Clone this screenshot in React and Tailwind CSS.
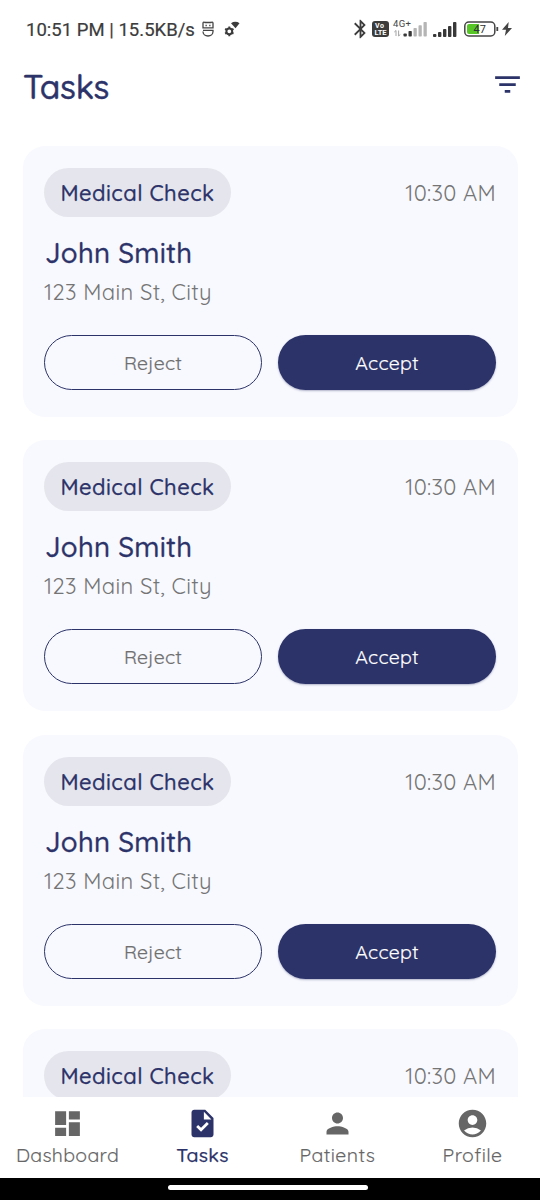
import React from "react";
import { MdDashboard, MdTask, MdPerson, MdFilterList, MdBluetooth } from "react-icons/md";

function AccountCircle() {
  return (
    <svg viewBox="0 0 24 24" className="size-[33px]" fill="currentColor">
      <path d="M12 2C6.48 2 2 6.48 2 12s4.48 10 10 10 10-4.48 10-10S17.52 2 12 2zm0 4c1.93 0 3.5 1.57 3.5 3.5S13.93 13 12 13s-3.5-1.57-3.5-3.5S10.07 6 12 6zm0 14c-2.03 0-4.43-.82-6.14-2.88a9.947 9.947 0 0 1 12.28 0C16.43 19.18 14.03 20 12 20z" />
    </svg>
  );
}

function Signal({ className }) {
  const bars = [
    [0, 12, 3], [5, 10, 5], [10, 7, 8], [15, 4, 11], [20, 0, 15],
  ];
  return (
    <svg viewBox="0 0 24 15" className={className}>
      {bars.map(([x, y, h]) => (
        <rect key={x} x={x} y={y} width="3.4" height={h} rx="0.9" fill="#383838" />
      ))}
    </svg>
  );
}

function StatusBar() {
  return (
    <div className="flex h-[58px] shrink-0 items-center pl-[26px] pr-[28px] text-[#3c3c3c]">
      <span className="w-[170px] pt-[1px] whitespace-nowrap font-[Roboto,sans-serif] text-[18.5px] leading-[24px] tracking-[0.02px] [-webkit-text-stroke:0.2px_#3c3c3c]">10:51 PM | 15.5KB/s</span>
      <svg viewBox="0 0 12 16" className="mb-[1px] ml-[6px] h-4 w-3" fill="none" stroke="#444" strokeWidth="1.3">
        <path d="M1 6.8V2.2C1 .8 2.4.8 3 1.5h6c.6-.7 2-.7 2 .7v4.6zM1 9.3h10v1.2a5 4.5 0 0 1-10 0" />
        <path d="M3.5 4.5h1.3M7.2 4.5h1.3" />
      </svg>
      <svg viewBox="0 0 16 16" className="mb-[1px] ml-[10px] size-4">
        <circle cx="5.3" cy="10.3" r="2.9" fill="none" stroke="#3c3c3c" strokeWidth="2" />
        <path d="M5.3 5.5v2M5.3 13v2.2M1.1 7.9l1.8 1M7.7 11.7l1.8 1M1.1 12.7l1.8-1M7.7 8.9l1.8-1" stroke="#3c3c3c" strokeWidth="1.9" />
        <path d="M7 2.2C9.5.4 13 .4 15.5 2.2L11.5 7.3z" fill="#3c3c3c" />
      </svg>
      <div className="ml-auto flex items-center">
        <MdBluetooth className="mb-[1px] h-[22px] w-[23px]" />
        <svg viewBox="0 0 17 16" className="h-4 w-[17px]">
          <rect width="17" height="16" rx="3" fill="#3c3c3c" />
          <text x="3" y="7.2" fill="#fff" fontSize="7" fontWeight="700" fontFamily="Roboto, sans-serif" textLength="9">Vo</text>
          <text x="2.5" y="14" fill="#fff" fontSize="7.5" fontWeight="700" fontFamily="Roboto, sans-serif" textLength="12">LTE</text>
        </svg>
        <svg viewBox="0 0 36 18" className="mb-[2px] ml-[4px] h-[18px] w-9">
          <text x="0" y="7.8" fill="#444" fontSize="9.5" fontFamily="Roboto, sans-serif" textLength="18">4G+</text>
          <path d="M3 17v-5.5L1.3 13M5.6 11.5V17l1.7-1.5" fill="none" stroke="#999" strokeWidth="0.9" />
          <rect x="10.5" y="14.5" width="3.3" height="3" rx=".8" fill="#383838" />
          <rect x="15.5" y="12" width="3.3" height="5.5" rx=".8" fill="#383838" />
          <rect x="20.5" y="9" width="3.3" height="8.5" rx=".8" fill="#b5b5b5" />
          <rect x="25.5" y="6.3" width="3.3" height="11.2" rx=".8" fill="#b5b5b5" />
          <rect x="30.5" y="3" width="3.3" height="14.5" rx=".8" fill="#b5b5b5" />
        </svg>
        <Signal className="ml-[4px] h-[15px] w-6" />
        <svg viewBox="0 0 35 16" className="mb-[1px] ml-[7px] h-4 w-[35px]">
          <rect x=".8" y="1" width="30" height="14" rx="4" fill="#fff" stroke="#444" strokeWidth="1.5" />
          <path d="M5 3h10v10H5a2 2 0 0 1-2-2V5a2 2 0 0 1 2-2z" fill="#55c626" />
          <path d="M33.3 6v4" stroke="#444" strokeWidth="1.8" />
          <text x="9.5" y="12" fill="#303030" fontSize="11" fontFamily="Roboto, sans-serif" textLength="12.5">47</text>
        </svg>
        <svg viewBox="0 0 10 14" className="ml-[3px] h-[14px] w-[10px]" fill="#444">
          <path d="M6.7 0 0 7.8h4L2.8 14 10 6H6z" />
        </svg>
      </div>
    </div>
  );
}

function TaskCard({ collapsed }) {
  return (
    <article className="h-[271px] shrink-0 rounded-[22px] bg-[#f8f9fe] px-[21.5px] pt-[22px]">
      <div className="flex h-[49px] items-center justify-between">
        <span className="flex h-[49px] w-[187px] items-center justify-center rounded-full bg-[#e5e5ed] pt-[1px] text-[22px] leading-[30px] font-medium tracking-[0.45px] text-[#2c3369] [-webkit-text-stroke:0.25px_#2c3369]">
          Medical Check
        </span>
        <span className="pt-[1px] text-[22px] leading-[30px] tracking-[0.3px] text-[#757575]">10:30 AM</span>
      </div>
      {!collapsed && (
        <>
          <h2 className="mt-[19px] pl-[1px] text-[27.5px] leading-[34px] font-medium tracking-[0.28px] text-[#2c3369] [-webkit-text-stroke:0.3px_#2c3369]">John Smith</h2>
          <p className="mt-[8px] text-[22px] leading-[28px] tracking-[0.35px] text-[#757575]">123 Main St, City</p>
          <div className="mt-[29px] grid grid-cols-2 gap-4">
            <button className="h-[55px] rounded-full border-[1.5px] border-[#2c3369] text-[19.5px] tracking-[0.2px] text-[#6f6f6f] [-webkit-text-stroke:0.2px_#6f6f6f]">Reject</button>
            <button className="h-[55px] rounded-full bg-[#2c3369] text-[19.5px] tracking-[0.2px] text-white shadow-[0_1px_2px_rgba(44,51,105,0.35)] [-webkit-text-stroke:0.2px_#fff]">Accept</button>
          </div>
        </>
      )}
    </article>
  );
}

function NavItem({ icon, label, active, track }) {
  return (
    <a className={`flex flex-1 flex-col items-center pt-[9.5px] ${active ? "font-medium text-[#2c3369] [-webkit-text-stroke:0.25px_#2c3369]" : "text-[#666] [-webkit-text-stroke:0.15px_#666]"}`}>
      {icon}
      <span className={`mt-[2px] text-[19.5px] leading-[26px] ${track}`}>{label}</span>
    </a>
  );
}

export default function App() {
  return (
    <div className="flex h-[1200px] w-[540px] flex-col overflow-hidden bg-white font-[Quicksand,Lato,sans-serif]">
      <StatusBar />
      <header className="flex h-[56px] shrink-0 items-center justify-between pr-[16.5px] pl-[23px]">
        <h1 className="text-[33.5px] leading-[50px] font-medium tracking-[-0.3px] text-[#2c3369] [-webkit-text-stroke:0.4px_#2c3369]">Tasks</h1>
        <MdFilterList className="mb-[4px] size-[33px] text-[#2c3369]" />
      </header>
      <main className="flex min-h-0 flex-1 flex-col gap-[23.4px] overflow-hidden px-[22.5px] pt-[32px]">
        <TaskCard />
        <TaskCard />
        <TaskCard />
        <TaskCard collapsed />
      </main>
      <nav className="flex h-[81px] shrink-0 bg-white">
        <NavItem icon={<MdDashboard className="size-[33px]" />} label="Dashboard" track="tracking-[0.3px]" />
        <NavItem icon={<MdTask className="size-[33px]" />} label="Tasks" active track="tracking-[0.3px]" />
        <NavItem icon={<MdPerson className="size-[33px]" />} label="Patients" track="tracking-[0.4px]" />
        <NavItem icon={<AccountCircle />} label="Profile" track="tracking-[0.4px]" />
      </nav>
      <div className="flex h-[22px] shrink-0 justify-center bg-black pt-[7px] pr-[4px]">
        <div className="h-[5px] w-[200px] rounded-full bg-white" />
      </div>
    </div>
  );
}
